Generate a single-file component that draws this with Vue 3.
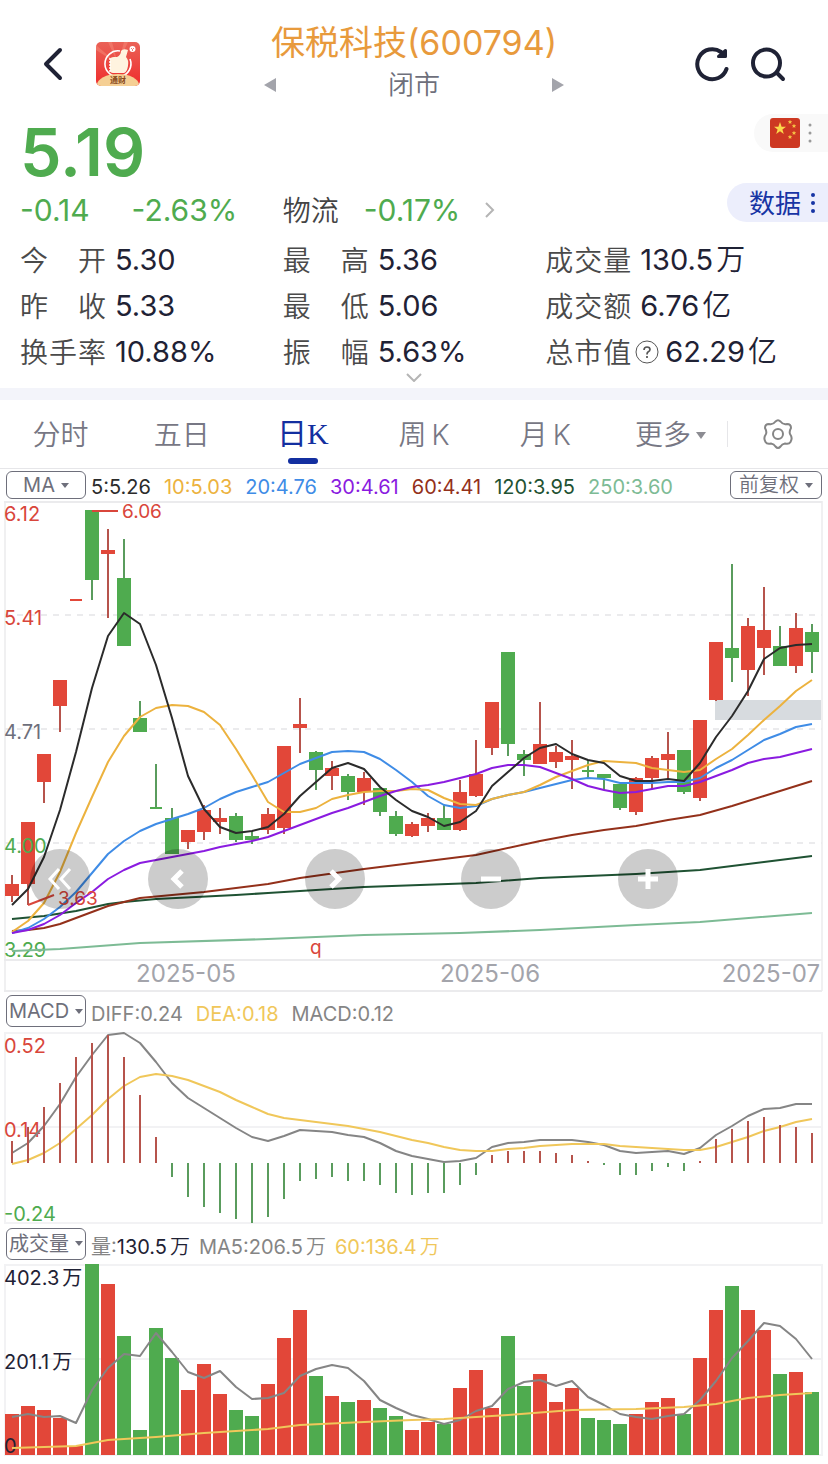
<script setup>
import {computed, ref} from "vue";

const stock = {
  name: '保税科技',
  code: '600794',
  status: '闭市',
  price: '5.19',
  change: '-0.14',
  percent: '-2.63%',
};

const stats = [
  {label: '今 开', value: '5.30'},
  {label: '最 高', value: '5.36'},
  {label: '成交量', value: '130.5', unit: '万'},
  {label: '昨 收', value: '5.33'},
  {label: '最 低', value: '5.06'},
  {label: '成交额', value: '6.76', unit: '亿'},
  {label: '换手率', value: '10.88%'},
  {label: '振 幅', value: '5.63%'},
  {label: '总市值', value: '62.29', unit: '亿', help: true},
];

const tabs = ['分时', '五日', '日K', '周\u2009K', '月\u2009K'];
const activeTab = ref('日K');

// index -> x on the chart
const toX = (i) => 12 + i * 16;

// [body top, body bottom, wick top, wick bottom, rising]
const candles = [
  [884, 896, 875, 902, 1], [822, 884, 822, 905, 1], [754, 782, 754, 803, 1], [680, 706, 680, 732, 1],
  [599, 601, 599, 601, 1], [510, 580, 510, 600, 0], [550, 554, 529, 618, 1], [578, 646, 539, 646, 0],
  [718, 732, 701, 732, 0], [807, 809, 764, 809, 0], [818, 854, 808, 854, 0], [830, 842, 830, 849, 1],
  [810, 832, 805, 840, 1], [818, 822, 808, 834, 1], [816, 840, 813, 842, 0], [836, 840, 831, 844, 0],
  [814, 830, 808, 834, 1], [746, 828, 746, 834, 1], [724, 728, 698, 753, 1], [752, 770, 751, 790, 0],
  [768, 776, 761, 790, 1], [776, 792, 774, 800, 0], [778, 792, 772, 805, 1], [788, 812, 788, 816, 0],
  [816, 834, 811, 836, 0], [824, 836, 822, 837, 1], [818, 826, 813, 832, 1], [818, 830, 805, 830, 0],
  [792, 830, 780, 831, 1], [774, 796, 740, 797, 1], [702, 748, 702, 755, 1], [652, 744, 652, 756, 0],
  [754, 760, 750, 776, 0], [744, 764, 702, 764, 1], [752, 762, 746, 768, 1], [756, 760, 740, 789, 1],
  [770, 772, 760, 778, 0], [774, 778, 774, 790, 0], [784, 808, 784, 810, 0], [778, 812, 777, 815, 1],
  [758, 778, 756, 789, 1], [754, 760, 732, 780, 1], [750, 792, 750, 794, 0], [720, 798, 720, 801, 1],
  [642, 700, 642, 701, 1], [648, 658, 564, 682, 0], [626, 670, 618, 696, 1], [630, 648, 587, 675, 1],
  [646, 666, 626, 666, 0], [628, 666, 613, 673, 1], [632, 652, 624, 673, 0],
];

const averages = [
  {
    label: '250:3.60', color: '#7dbb95',
    points: [[0, 951], [3, 949], [8, 943], [16, 939], [22, 935], [28, 933], [33, 930], [39, 925], [43, 922], [50, 913]]
  },
  {
    label: '120:3.95', color: '#1f5233',
    points: [[0, 919], [2, 916], [4, 911], [6, 904], [7, 902], [9, 899], [14, 895], [16, 893], [22, 887], [29, 883], [33, 878], [39, 874], [43, 870], [47, 862], [50, 856]]
  },
  {
    label: '60:4.41', color: '#93301a',
    points: [[0, 931], [1, 930], [2, 928], [3, 924], [4, 918], [5, 912], [6, 906], [7, 902], [8, 898], [10, 895], [12, 892], [14, 888], [16, 884], [18, 878], [22, 869], [27, 859], [29, 855], [33, 841], [35, 835], [37, 830], [39, 826], [41, 820], [43, 815], [45, 806], [47, 796], [49, 786], [50, 781]]
  },
  {
    label: '20:4.76', color: '#3f8ce6',
    points: [933, 928, 919, 907, 892, 873, 854, 841, 831, 824, 819, 814, 808, 799, 792, 787, 782, 773, 764, 758, 752, 751, 752, 759, 770, 782, 796, 805, 808, 806, 799, 795, 792, 788, 784, 780, 778, 779, 783, 783, 783, 782, 782, 778, 768, 760, 750, 740, 734, 727, 724]
  },
  {
    label: '10:5.03', color: '#ecb23e',
    points: [932, 921, 903, 872, 833, 797, 762, 736, 717, 708, 705, 706, 712, 725, 749, 775, 802, 812, 812, 808, 799, 795, 792, 791, 791, 789, 790, 798, 804, 805, 799, 795, 792, 785, 777, 771, 765, 761, 762, 763, 768, 770, 772, 770, 759, 749, 735, 720, 706, 691, 680]
  },
  {
    label: '30:4.61', color: '#8a1be0',
    points: [933, 930, 924, 915, 903, 892, 879, 870, 863, 860, 857, 854, 851, 847, 844, 841, 837, 831, 825, 819, 813, 808, 802, 796, 791, 787, 785, 782, 778, 774, 768, 765, 765, 767, 773, 779, 786, 790, 793, 792, 789, 786, 786, 782, 776, 770, 763, 759, 757, 753, 749]
  },
  {
    label: '5:5.26', color: '#2b2b2b',
    points: [905, 889, 857, 810, 752, 688, 636, 613, 624, 665, 718, 776, 809, 827, 833, 831, 827, 814, 796, 782, 768, 763, 769, 787, 800, 811, 817, 826, 822, 811, 786, 772, 758, 748, 744, 754, 760, 763, 776, 781, 781, 779, 781, 763, 737, 716, 691, 659, 648, 645, 644]
  },
];
// legend runs from the shortest period to the longest
const legend = computed(() => [...averages].sort((a, b) => parseInt(a.label) - parseInt(b.label)));

const toLine = (points) => points.map((p, i) => Array.isArray(p) ? `${toX(p[0])},${p[1]}` : `${toX(i)},${p}`).join(' ');

const macdZero = 1163;
const macdBars = [1141, 1127, 1107, 1083, 1057, 1043, 1035, 1057, 1095, 1137, 1177, 1197, 1207, 1213, 1219, 1223, 1217, 1199, 1181, 1179, 1177, 1181, 1181, 1185, 1193, 1195, 1193, 1193, 1185, 1175, 1155, 1151, 1151, 1151, 1153, 1155, 1161, 1165, 1175, 1175, 1171, 1167, 1171, 1161, 1139, 1129, 1121, 1117, 1125, 1127, 1133];
const diff = [1153, 1143, 1126, 1104, 1077, 1055, 1035, 1033, 1043, 1062, 1083, 1098, 1108, 1118, 1128, 1137, 1141, 1136, 1130, 1131, 1132, 1135, 1137, 1143, 1151, 1156, 1159, 1162, 1161, 1158, 1147, 1143, 1142, 1140, 1140, 1140, 1142, 1145, 1151, 1153, 1152, 1151, 1154, 1148, 1135, 1126, 1116, 1109, 1108, 1104, 1104];
const dea = [1164, 1160, 1153, 1143, 1129, 1115, 1099, 1086, 1077, 1074, 1076, 1080, 1086, 1092, 1100, 1107, 1114, 1118, 1120, 1122, 1124, 1126, 1129, 1132, 1136, 1140, 1143, 1147, 1150, 1151, 1151, 1149, 1148, 1146, 1145, 1144, 1144, 1144, 1146, 1147, 1148, 1149, 1150, 1150, 1147, 1142, 1137, 1131, 1127, 1122, 1119];

const volumeBase = 1455;
const volumes = [1414, 1406, 1410, 1418, 1446, 1264, 1284, 1336, 1430, 1328, 1358, 1390, 1364, 1394, 1410, 1416, 1384, 1338, 1310, 1376, 1396, 1402, 1400, 1408, 1416, 1430, 1422, 1424, 1388, 1370, 1408, 1336, 1386, 1374, 1402, 1388, 1418, 1420, 1424, 1414, 1402, 1398, 1414, 1358, 1310, 1286, 1310, 1330, 1374, 1372, 1392];
const volumeMa5 = [1417, 1414, 1417, 1416, 1423, 1390, 1368, 1354, 1356, 1333, 1352, 1372, 1378, 1371, 1387, 1399, 1398, 1393, 1376, 1369, 1365, 1368, 1381, 1400, 1408, 1415, 1419, 1424, 1420, 1411, 1406, 1389, 1382, 1380, 1386, 1381, 1397, 1405, 1414, 1417, 1419, 1416, 1414, 1400, 1381, 1358, 1341, 1323, 1326, 1339, 1359];
const volumeMa60 = [[0, 1448], [2, 1447], [4, 1446], [5, 1443], [6, 1440], [7, 1439], [8, 1438], [9, 1437], [12, 1433], [14, 1431], [16, 1429], [18, 1425], [22, 1422], [25, 1420], [27, 1419], [31, 1415], [35, 1410], [39, 1409], [42, 1407], [44, 1404], [46, 1398], [48, 1395], [50, 1393]];

const controls = [
  {name: 'first', title: '最早', path: 'M29 20L20 30L29 40M40 20L31 30L40 40'},
  {name: 'prev', title: '向左', path: 'M34 22L26 30L34 38'},
  {name: 'next', title: '向右', path: 'M26 22L34 30L26 38'},
  {name: 'minus', title: '缩小', path: 'M20 30H40'},
  {name: 'plus', title: '放大', path: 'M20 30H40M30 20V40'},
];
</script>

<template>
  <div class="page">
    <header class="header">
      <div class="headerLeft">
        <button class="iconBtn back" aria-label="返回">
          <svg width="22" height="36" viewBox="0 0 22 36"><path d="M18 4L4 18L18 32" fill="none" stroke="#1f2235" stroke-width="4" stroke-linecap="round" stroke-linejoin="round"/></svg>
        </button>
        <svg class="logo" width="44" height="44" viewBox="0 0 44 44">
          <defs>
            <linearGradient id="logoRed" x1="0" y1="0" x2="0" y2="1">
              <stop offset="0" stop-color="#ea6257"/>
              <stop offset="1" stop-color="#ef2c2c"/>
            </linearGradient>
            <clipPath id="logoClip"><rect width="44" height="44" rx="5"/></clipPath>
          </defs>
          <g clip-path="url(#logoClip)">
            <rect width="44" height="44" fill="url(#logoRed)"/>
            <path d="M22 22L12 0H16ZM22 22L28 0H32ZM22 22L0 8V3Z" fill="#f58a78" opacity=".5"/>
            <path d="M24 9A13 13 0 1 0 34 17" fill="none" stroke="#fff" stroke-width="1.6"/>
            <path d="M14 18Q14 15 18 15H21Q25 13 25 9Q27 6 32 8L30 15Q33 18 32 24Q31 30 28 31H17Q14 31 14 28Z" fill="#fff3df"/>
            <path d="M14 16V30" stroke="#fff" stroke-width="1.5" stroke-dasharray="2 1"/>
            <circle cx="36.500" cy="7" r="3" fill="#fff"/>
            <path d="M35 6L36.500 7.500L38 6M36.500 7.500V9" stroke="#ea6257" stroke-width=".8" fill="none"/>
            <ellipse cx="22" cy="43" rx="21" ry="11" fill="#f5cf94"/>
          </g>
          <text x="22" y="41" text-anchor="middle" class="logoText">通财</text>
        </svg>
      </div>
      <div class="headerCenter">
        <h1 class="title">{{ stock.name }}({{ stock.code }})</h1>
        <div class="statusRow">
          <button class="iconBtn" aria-label="上一只"><svg width="12" height="16" viewBox="0 0 12 16"><path d="M12 1V15L0 8Z" fill="#a3a4ab"/></svg></button>
          <span class="status">{{ stock.status }}</span>
          <button class="iconBtn" aria-label="下一只"><svg width="12" height="16" viewBox="0 0 12 16"><path d="M0 1V15L12 8Z" fill="#a3a4ab"/></svg></button>
        </div>
      </div>
      <div class="headerRight">
        <button class="iconBtn" aria-label="刷新">
          <svg width="36" height="36" viewBox="0 0 36 36" fill="none" stroke="#1f2235" stroke-width="4" stroke-linecap="round" stroke-linejoin="round"><path d="M32.500 23A15 15 0 1 1 27 6"/><path d="M31.500 4.500V10.500H24.500Z" fill="#1f2235" stroke-width="3"/></svg>
        </button>
        <button class="iconBtn" aria-label="搜索">
          <svg width="36" height="36" viewBox="0 0 36 36" fill="none" stroke="#1f2235" stroke-width="4" stroke-linecap="round"><circle cx="16.500" cy="17" r="13.500"/><path d="M27 27L33 33"/></svg>
        </button>
      </div>
    </header>

    <section class="quote">
      <div class="priceRow">
        <strong class="price">{{ stock.price }}</strong>
        <button class="market" aria-label="市场">
          <svg width="30" height="30" viewBox="0 0 30 30">
            <rect width="30" height="30" rx="3" fill="#cd3822"/>
            <path d="M10 4L11.600 8.800H16L12.400 11.600L13.800 16L10 13.200L6.200 16L7.600 11.600L4 8.800H8.400Z" fill="#fbd84b"/>
            <path v-for="(s, i) in [[20, 4], [24, 8], [24, 15], [20, 19]]" :key="i" :transform="`translate(${s[0]} ${s[1]})`" d="M0 -2.200L.7 -.7H2.200L1 .4L1.400 2L0 1L-1.400 2L-1 .4L-2.200 -.7H-.7Z" fill="#f6c445"/>
          </svg>
          <svg width="4" height="22" viewBox="0 0 4 22" fill="#9a9a9a"><circle cx="2" cy="3" r="1.500"/><circle cx="2" cy="11" r="1.500"/><circle cx="2" cy="19" r="1.500"/></svg>
        </button>
      </div>
      <div class="columns changeRow">
        <div class="changes"><span>{{ stock.change }}</span><span>{{ stock.percent }}</span></div>
        <a class="sector" href="#">
          <span class="sectorName">物流</span>
          <span>-0.17%</span>
          <svg width="10" height="16" viewBox="0 0 10 16"><path d="M1 1L8 8L1 15" fill="none" stroke="#b5b5b5" stroke-width="2"/></svg>
        </a>
        <button class="dataBtn">
          <span class="dataText">数据</span>
          <svg width="6" height="22" viewBox="0 0 6 22" fill="#1734a4"><circle cx="3" cy="3" r="2"/><circle cx="3" cy="11" r="2"/><circle cx="3" cy="19" r="2"/></svg>
        </button>
      </div>
      <dl class="columns stats">
        <div class="stat" v-for="item in stats" :key="item.label">
          <dt class="statLabel">{{ item.label }}</dt>
          <svg v-if="item.help" class="help" width="24" height="24" viewBox="0 0 24 24" fill="none" stroke="#555"><circle cx="12" cy="12" r="11"/><path d="M9 10Q9 7 12 7Q15 7 15 9.500Q15 11 13 12Q12 12.700 12 14.500M12 16V18" stroke-width="1.700"/></svg>
          <dd class="statValue">{{ item.value }}<span v-if="item.unit" class="unit">{{ item.unit }}</span></dd>
        </div>
      </dl>
      <button class="iconBtn expand" aria-label="展开">
        <svg width="16" height="9" viewBox="0 0 16 9"><path d="M1 1L8 8L15 1" fill="none" stroke="#b5b5b5" stroke-width="2"/></svg>
      </button>
    </section>

    <nav class="tabs">
      <button v-for="tab in tabs" :key="tab" class="tab" :class="{active: tab === activeTab}" @click="activeTab = tab">{{ tab }}</button>
      <button class="tab more">更多<svg width="10" height="7" viewBox="0 0 10 7"><path d="M0 0H10L5 7Z" fill="#8c8c92"/></svg></button>
      <button class="iconBtn settings" aria-label="设置">
        <svg width="30" height="30" viewBox="0 0 30 30" fill="none" stroke="#858585" stroke-width="2" stroke-linejoin="round"><path d="M12.500 2.500Q15 0 17.500 2.500Q20 6 24 5Q28 5 28 9Q26 12.500 27 15Q30 19 27.500 23Q26 25.500 22 24.500Q19 25 17.500 27.500Q15 30.500 12.500 27.500Q11 25 8 24.500Q4 25.500 2.500 23Q0 19 3 15Q4 12.500 2 9Q2 5 6 5Q10 6 12.500 2.500Z"/><circle cx="15" cy="15" r="5"/></svg>
      </button>
    </nav>

    <section class="panel">
      <div class="legend">
        <button class="picker">MA<i class="caret"></i></button>
        <span v-for="item in legend" :key="item.label" class="legendItem" :style="{color: item.color}">{{ item.label }}</span>
        <button class="picker adjust">前复权<i class="caret"></i></button>
      </div>
      <div class="chartBox">
        <svg class="chart" viewBox="0 501 828 490">
          <g fill="none" stroke="#ebebed" stroke-width="2">
            <path d="M4 502H822M4 960H822M4 991H822"/>
            <path d="M5 501V991M822 501V991" stroke-width="1.500"/>
            <path d="M5 615H822M5 729H822M5 843H822" stroke-dasharray="6 6"/>
          </g>
          <rect x="715" y="700" width="106" height="20" fill="#d7dbdf"/>
          <g v-for="(c, i) in candles" :key="i">
            <rect :x="toX(i) - 1" :y="c[2]" width="2" :height="c[3] - c[2]" :fill="c[4] ? '#b6544c' : '#5a9c5d'"/>
            <rect :x="toX(i) - (c[1] - c[0] > 2 ? 7 : 6)" :y="c[0]" :width="c[1] - c[0] > 2 ? 14 : 12" :height="c[1] - c[0]" :fill="c[4] ? '#e24739' : '#4fab4f'"/>
          </g>
          <g class="axis">
            <text x="4" y="521" class="up">6.12</text>
            <text x="4" y="625" class="up">5.41</text>
            <text x="4" y="739">4.71</text>
            <text x="4" y="853" class="down">4.00</text>
            <text x="4" y="957" class="down">3.29</text>
          </g>
          <polyline v-for="item in averages" :key="item.label" :points="toLine(item.points)" :stroke="item.color" class="line"/>
          <path d="M92 511H118M28 905L54 895" class="mark"/>
          <g class="axis small">
            <text x="122" y="518" class="up">6.06</text>
            <text x="58" y="905" class="up">3.63</text>
            <text x="310" y="954" class="up">q</text>
          </g>
          <g class="date">
            <text x="186" y="982" text-anchor="middle">2025-05</text>
            <text x="490" y="982" text-anchor="middle">2025-06</text>
            <text x="820" y="982" text-anchor="end">2025-07</text>
          </g>
        </svg>
        <button v-for="item in controls" :key="item.name" class="control" :class="item.name" :aria-label="item.title">
          <svg width="60" height="60" viewBox="0 0 60 60"><path :d="item.path" fill="none" stroke="#fff" :stroke-width="item.name === 'first' ? 3 : 5"/></svg>
        </button>
      </div>
    </section>

    <section class="panel">
      <div class="legend tall">
        <button class="picker">MACD<i class="caret"></i></button>
        <span class="legendItem gray">DIFF:0.24</span>
        <span class="legendItem yellow">DEA:0.18</span>
        <span class="legendItem gray">MACD:0.12</span>
      </div>
      <svg class="chart" viewBox="0 1031 828 193">
        <path d="M5 1033H822V1223H5ZM5 1127H822" class="frame"/>
        <g class="axis">
          <text x="4" y="1053" class="up">0.52</text>
          <text x="4" y="1137" class="up">0.14</text>
          <text x="4" y="1221" class="down">-0.24</text>
        </g>
        <polyline :points="toLine(diff)" class="line" stroke="#858585"/>
        <polyline :points="toLine(dea)" class="line" stroke="#f0c75a"/>
        <rect v-for="(y, i) in macdBars" :key="i" :x="toX(i) - 1" :y="Math.min(y, macdZero)" width="2" :height="Math.abs(y - macdZero)" :fill="y < macdZero ? '#b6544c' : '#5a9c5d'"/>
      </svg>
    </section>

    <section class="panel">
      <div class="legend tall volume">
        <button class="picker">成交量<i class="caret"></i></button>
        <span class="legendItem gray">量:<b class="dark">130.5<span class="unit">万</span></b></span>
        <span class="legendItem gray">MA5:206.5<span class="unit">万</span></span>
        <span class="legendItem yellow">60:136.4<span class="unit">万</span></span>
      </div>
      <svg class="chart" viewBox="0 1264 828 192">
        <path d="M5 1265H822V1455H5ZM5 1359H822" class="frame"/>
        <rect v-for="(y, i) in volumes" :key="i" :x="toX(i) - 7" :y="y" width="14" :height="volumeBase - y" :fill="candles[i][4] ? '#e24739' : '#4fab4f'"/>
        <g class="axis ink">
          <text x="4" y="1285">402.3<tspan dx="3">万</tspan></text>
          <text x="4" y="1369">201.1<tspan dx="3">万</tspan></text>
          <text x="4" y="1453">0</text>
        </g>
        <polyline :points="toLine(volumeMa5)" class="line" stroke="#858585"/>
        <polyline :points="toLine(volumeMa60)" class="line" stroke="#f0c75a"/>
      </svg>
    </section>
  </div>
</template>

<style>
body{
  margin: 0;
  background-color: #fff;
}
</style>

<style scoped>
.page{
  font-family: Inter, "Noto Sans CJK SC", sans-serif;
  line-height: 1.4;
  color: #1f2235;
  padding-bottom: 8px;
}
button{
  font-family: inherit;
  line-height: inherit;
  border: none;
  background: none;
  padding: 0;
  margin: 0;
  color: inherit;
  cursor: pointer;
}
svg{
  display: block;
}
.iconBtn{
  display: flex;
}
.header{
  display: grid;
  grid-template-columns: 1fr 300px 1fr;
  height: 112px;
  box-sizing: border-box;
  padding-top: 16px;
}
.headerLeft, .headerRight{
  display: flex;
  align-items: center;
}
.headerLeft{
  padding-left: 42px;
  gap: 32px;
}
.headerRight{
  justify-content: flex-end;
  padding-right: 42px;
  gap: 20px;
}
.logoText{
  font-size: 8px;
  font-weight: 700;
  fill: #8a4a1c;
}
.title{
  margin: 0;
  font-size: 34px;
  line-height: 54px;
  font-weight: 400;
  text-align: center;
  white-space: nowrap;
  color: #e89a3c;
}
.statusRow{
  display: flex;
  justify-content: space-between;
  align-items: center;
  height: 30px;
}
.status{
  font-size: 26px;
  line-height: 30px;
  font-weight: 350;
  color: #6e6f7b;
}
.quote{
  padding: 0 20px;
  border-bottom: 12px solid #f3f4fa;
}
.priceRow{
  display: flex;
  justify-content: space-between;
  align-items: flex-start;
  height: 71px;
  margin-right: -20px;
}
.price{
  font-size: 66px;
  line-height: 80px;
  font-weight: 600;
  color: #4fab4f;
}
.market{
  display: flex;
  align-items: center;
  gap: 8px;
  height: 38px;
  margin-top: 2px;
  padding: 0 16px;
  border-radius: 19px 0 0 19px;
  background-color: #f9f9f9;
}
.columns{
  display: grid;
  grid-template-columns: repeat(3, 1fr);
}
.changeRow{
  height: 54px;
  align-items: center;
  font-size: 30px;
  color: #4fab4f;
}
.changes{
  display: flex;
  gap: 42px;
}
.sector{
  display: flex;
  align-items: center;
  gap: 25px;
  color: inherit;
  text-decoration: none;
}
.sectorName{
  padding-top: 3px;
  font-size: 28px;
  font-weight: 350;
  color: #444;
}
.dataBtn{
  display: flex;
  align-items: center;
  justify-self: end;
  align-self: start;
  gap: 9px;
  height: 39px;
  margin-right: -20px;
  padding: 0 12px 0 22px;
  border-radius: 20px 0 0 20px;
  background-color: #eceefc;
  color: #1734a4;
  font-size: 26px;
}
.dataText{
  padding-top: 3px;
}
.stats{
  margin: 0 0 -2px;
}
.stat{
  display: flex;
  align-items: center;
  height: 46px;
  font-size: 28px;
  white-space: nowrap;
}
.statLabel{
  width: 86px;
  padding-top: 3px;
  text-align-last: justify;
  font-weight: 350;
  color: #4a4a4a;
}
.help{
  margin-left: 4px;
}
.statValue{
  margin-left: 9px;
  font-size: 29px;
}
.help + .statValue{
  margin-left: 6px;
}
.unit{
  margin-left: 3px;
  font-weight: 350;
}
.expand{
  margin: 0 auto;
  padding: 0 0 6px;
}
.tabs{
  display: grid;
  grid-template-columns: repeat(6, 1fr) 101px;
  height: 69px;
  border-bottom: 1px solid #e6e6e9;
  box-sizing: border-box;
}
.tab{
  position: relative;
  padding-top: 3px;
  font-size: 28px;
  font-weight: 350;
  color: #777784;
}
.tab.active{
  font-family: "Liberation Serif", "Noto Sans CJK SC", serif;
  font-size: 30px;
  font-weight: 400;
  padding-top: 0;
  color: #132fa0;
}
.tab.active::after{
  content: "";
  position: absolute;
  left: 50%;
  bottom: 4px;
  width: 30px;
  height: 6px;
  margin-left: -15px;
  border-radius: 3px;
  background-color: #132fa0;
}
.more{
  display: flex;
  align-items: center;
  justify-content: center;
  gap: 5px;
  padding-left: 8px;
}
.settings{
  height: 26px;
  align-self: center;
  align-items: center;
  justify-content: center;
  border-left: 1px solid #e6e6e9;
}
.legend{
  display: flex;
  align-items: center;
  gap: 13px;
  height: 32px;
  padding: 0 6px;
  font-size: 20px;
  white-space: nowrap;
}
.legend.tall{
  height: 40px;
}
.legend.volume{
  gap: 9px;
  padding-bottom: 1px;
  box-sizing: border-box;
}
.legendItem{
  padding-top: 3px;
}
.tall .legendItem{
  padding-top: 6px;
}
.picker{
  display: flex;
  align-items: center;
  justify-content: center;
  gap: 6px;
  width: 80px;
  height: 28px;
  margin-right: -8px;
  box-sizing: border-box;
  border: 1px solid #6e6f7b;
  border-radius: 6px;
  font-size: 20px;
  color: #6e6f7b;
}
.tall .picker{
  height: 32px;
}
.volume .picker{
  margin-right: -4px;
}
.adjust{
  width: 92px;
  margin: 0 0 0 auto;
  font-weight: 350;
}
.caret{
  border: 4px solid transparent;
  border-top: 5px solid #6e6f7b;
  border-bottom: none;
}
.chartBox{
  position: relative;
}
.chart{
  width: 100%;
  height: auto;
  overflow: visible;
}
.axis{
  font-size: 20px;
  fill: #6e6f7b;
}
.axis.small{
  font-size: 19px;
}
.axis.ink{
  fill: #1f2235;
}
.axis .up{
  fill: #d9463b;
}
.axis .down{
  fill: #4fab4f;
}
.date{
  font-size: 24px;
  fill: #a3a4ab;
}
.line{
  fill: none;
  stroke-width: 2;
  stroke-linejoin: round;
}
.mark{
  fill: none;
  stroke: #d9463b;
  stroke-width: 2;
}
.frame{
  fill: none;
  stroke: #f2f2f4;
  stroke-width: 2;
}
.control{
  position: absolute;
  top: 77%;
  width: 60px;
  height: 60px;
  margin: -29px 0 0 -30px;
  border-radius: 50%;
  background-color: rgba(0, 0, 0, .2);
}
.first{
  left: 7.25%;
}
.prev{
  left: 21.5%;
}
.next{
  left: 40.5%;
}
.minus{
  left: 59.3%;
}
.plus{
  left: 78.3%;
}
.gray{
  color: #858585;
}
.yellow{
  color: #f0c75a;
}
.dark{
  font-weight: 400;
  color: #1f2235;
}
</style>
